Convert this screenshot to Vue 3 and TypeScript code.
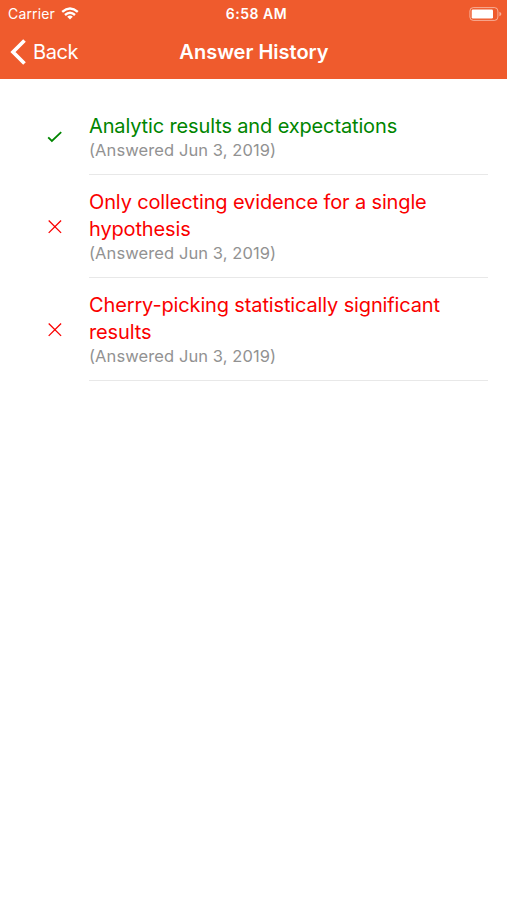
<script setup lang="ts">
interface Answer {
  lines: string[]
  date: string
  correct: boolean
}
const answers: Answer[] = [
  { lines: ['Analytic results and expectations'], date: '(Answered Jun 3, 2019)', correct: true },
  { lines: ['Only collecting evidence for a single', 'hypothesis'], date: '(Answered Jun 3, 2019)', correct: false },
  { lines: ['Cherry-picking statistically significant', 'results'], date: '(Answered Jun 3, 2019)', correct: false },
]
</script>

<template>
  <main class="screen">
    <header class="top">
      <div class="status">
        <div class="carrier">
          <span class="carrier-name">Carrier</span>
          <svg class="wifi" width="18" height="13" viewBox="0 0 18 13">
            <g fill="none" stroke="#fff" stroke-width="2.4">
              <path d="M1.2 4.9Q9-1.8 16.8 4.9" />
              <path d="M4 8Q9 3.6 14 8" />
            </g>
            <path d="M6.2 9.7Q9 7.5 11.8 9.7L9 12.5Z" fill="#fff" />
          </svg>
        </div>
        <span class="time">6:58 AM</span>
        <svg class="battery" width="33" height="14" viewBox="0 0 33 14">
          <rect x=".9" y=".6" width="28" height="12.8" rx="3.4" fill="none" stroke="#fff" stroke-opacity=".5" />
          <rect x="2.7" y="2.5" width="21.3" height="9" rx="1.2" fill="#fff" />
          <path d="M30.4 4.8Q32.4 5.5 32.4 7T30.4 9.2Z" fill="#fff" fill-opacity=".5" />
        </svg>
      </div>
      <nav class="nav">
        <button class="back">
          <svg width="17" height="28" viewBox="0 0 17 28"><path d="M14.5 2.5L3 14L14.5 25.5" /></svg>
          <span>Back</span>
        </button>
        <h1>Answer History</h1>
        <span></span>
      </nav>
    </header>
    <ul class="list">
      <li v-for="(a, i) in answers" :key="i" class="row" :class="{ correct: a.correct }">
        <div class="mark">
          <svg v-if="a.correct" width="16" height="14" viewBox="0 0 16 14"><path class="check" d="M1.2 7.3L4.9 11L14.2 2.2" /></svg>
          <svg v-else width="16" height="14" viewBox="0 0 16 14"><path d="M1.7 .5L14.1 12.9M14.1 .5L1.7 12.9" /></svg>
        </div>
        <div class="body">
          <h2>
            <span v-for="l in a.lines" :key="l" class="line">{{ l }}</span>
          </h2>
          <p>{{ a.date }}</p>
        </div>
      </li>
    </ul>
  </main>
</template>

<style>
body { margin: 0; background: #fff; }
</style>
<style scoped>
.screen { min-height: 900px; background: #fff; font-family: Inter, "Liberation Sans", sans-serif; }
.top { height: 79px; background: #ef5b2d; color: #fff; }
.status { height: 27px; display: grid; grid-template-columns: 1fr auto 1fr; align-items: center; padding: 0 5px 0 8px; box-sizing: border-box; font-size: 14px; }
.carrier { display: flex; align-items: center; gap: 6px; }
.carrier-name { letter-spacing: .15px; }
.time { font-weight: 600; font-size: 14px; letter-spacing: .5px; padding-left: 3px; }
.battery { justify-self: end; }
.nav { height: 50px; display: grid; grid-template-columns: 1fr auto 1fr; align-items: center; padding: 0 9px 0 10px; }
.back { display: flex; align-items: center; gap: 6px; padding: 0; border: 0; background: none; color: #fff; font: 20px Inter, sans-serif; letter-spacing: -.4px; }
.back path { fill: none; stroke: #fff; stroke-width: 3.7; }
h1 { margin: 0; font-size: 20px; font-weight: 600; }
.list { list-style: none; margin: 0; padding: 20px 19px 0 36px; }
.row { display: flex; color: #fa0000; }
.row.correct { color: #008500; }
.mark { width: 37px; margin-right: 16px; display: flex; align-items: center; justify-content: center; }
.mark path { fill: none; stroke: currentColor; stroke-width: 1.3; }
.mark .check { stroke-width: 1.8; }
.body { flex: 1; padding: 13px 0 13px; border-bottom: 1px solid #e8e8e8; }
h2 { margin: 0; padding-top: 1px; font-size: 20px; line-height: 27px; font-weight: 400; letter-spacing: -.14px; }
.line { display: block; white-space: nowrap; }
p { margin: -1px 0 0; font-size: 16.5px; line-height: 22px; letter-spacing: .09px; color: #929292; }
</style>
